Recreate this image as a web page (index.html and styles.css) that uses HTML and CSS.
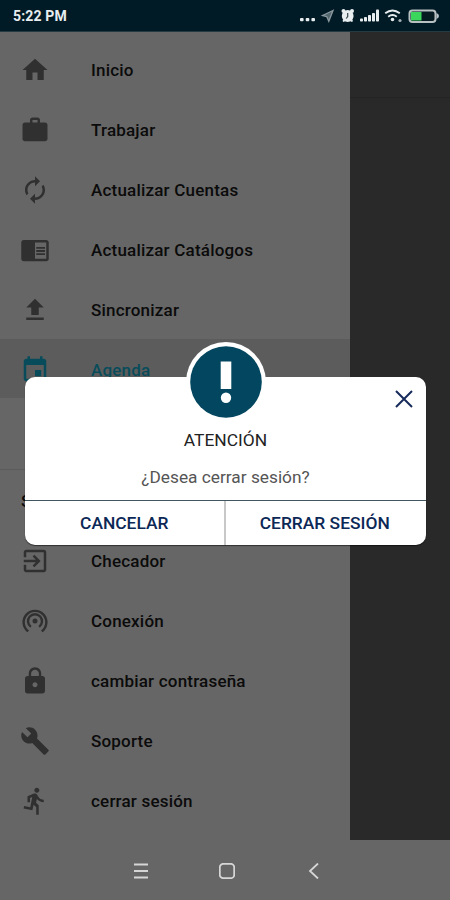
FILE: index.html
```html
<!DOCTYPE html>
<html lang="es">
<head>
<meta charset="utf-8">
<title>Menú</title>
<link rel="stylesheet" href="styles.css">
</head>
<body>
<div class="screen">
  <header class="status">
    <span class="time">5:22 PM</span>
    <svg class="status-icons" viewBox="0 0 142 20" width="142" height="20">
      <g fill="#e8eef0">
        <rect x="0" y="12" width="3.6" height="3.2" rx="1"/><rect x="5.7" y="12" width="3.6" height="3.2" rx="1"/><rect x="11.4" y="12" width="3.6" height="3.2" rx="1"/>
        <circle cx="47.700" cy="10" r="5.900"/><circle cx="43.500" cy="5" r="2"/><circle cx="52" cy="5" r="2"/>
        <path d="M42.500 15l1-2 2 2-2 1zM53 15l-1-2-2 2 2 1z"/>
        <rect x="60" y="12.500" width="3" height="3" rx=".8"/><rect x="64" y="11" width="3" height="4.500" rx=".8"/><rect x="68" y="9" width="3" height="6.500" rx=".8"/><rect x="72" y="7" width="3" height="8.500" rx=".8"/><rect x="76" y="3.500" width="3" height="12" rx=".8"/>
        <circle cx="92.500" cy="13.500" r="1.800"/><circle cx="100" cy="14.500" r="1.600" opacity=".7"/>
        <path d="M136.500 7q2.500 1 2.500 3t-2.500 3z" opacity=".8"/>
      </g>
      <path d="M22.500 9.500L33 4.500l-4.200 10.700-2-4.500z" fill="#52666d" stroke="#8b999e" stroke-width="1.300"/>
      <path d="M47.700 7v3.500l-1.500 2" fill="none" stroke="#31444b" stroke-width="1.200"/>
      <g fill="none" stroke="#e8eef0" stroke-width="1.900"><path d="M85.200 7.300q7.300-5.500 14.600 0"/><path d="M88.200 10.700q4.300-3.400 8.600 0"/></g>
      <rect x="109.500" y="4.500" width="26" height="11.500" rx="3" fill="#061a22" stroke="#b9c0c2" stroke-width="2"/>
      <rect x="111" y="6" width="10.500" height="8.500" fill="#3bd65c"/>
    </svg>
  </header>
  <div class="main">
    <nav class="drawer">
      <a class="item"><svg class="icon" viewBox="0 0 24 24"><path d="M10 20v-6h4v6h5v-8h3L12 3 2 12h3v8z"/></svg><span>Inicio</span></a>
      <a class="item"><svg class="icon" viewBox="0 0 24 24"><path fill-rule="evenodd" d="M20 6h-4V4c0-1.110-.89-2-2-2h-4c-1.110 0-2 .89-2 2v2H4c-1.110 0-2 .89-2 2v11c0 1.110.89 2 2 2h16c1.110 0 2-.89 2-2V8c0-1.110-.89-2-2-2zm-6 0h-4V4h4v2z"/></svg><span>Trabajar</span></a>
      <a class="item"><svg class="icon" viewBox="0 0 24 24"><path d="M12 6v3l4-4-4-4v3c-4.420 0-8 3.580-8 8 0 1.570.46 3.030 1.240 4.260L6.700 14.800c-.45-.83-.7-1.790-.7-2.800 0-3.310 2.690-6 6-6zm6.760 1.740L17.300 9.200c.44.84.7 1.790.7 2.800 0 3.310-2.690 6-6 6v-3l-4 4 4 4v-3c4.420 0 8-3.580 8-8 0-1.570-.46-3.030-1.240-4.260z"/></svg><span>Actualizar Cuentas</span></a>
      <a class="item"><svg class="icon" viewBox="0 0 24 24"><path fill-rule="evenodd" d="M13 12h7v1.500h-7zM13 9.500h7V11h-7zM13 14.500h7V16h-7zM21 4H3c-1.100 0-2 .9-2 2v13c0 1.100.9 2 2 2h18c1.100 0 2-.9 2-2V6c0-1.100-.9-2-2-2zm0 15h-9V6h9v13z"/></svg><span>Actualizar Catálogos</span></a>
      <a class="item"><svg class="icon" viewBox="0 0 24 24"><path d="M9 16h6v-6h4l-7-7-7 7h4zM5 18h14v2H5z"/></svg><span>Sincronizar</span></a>
      <a class="item active"><svg class="icon" viewBox="0 0 24 24"><path fill-rule="evenodd" d="M17 12h-5v5h5v-5zM16 1v2H8V1H6v2H5c-1.110 0-1.990.9-1.990 2L3 19c0 1.100.89 2 2 2h14c1.100 0 2-.9 2-2V5c0-1.100-.9-2-2-2h-1V1h-2zm3 18H5V8h14v11z"/></svg><span>Agenda</span></a>
      <div class="heading">S</div>
      <a class="item"><svg class="icon" viewBox="0 0 24 24"><path d="M10.090 15.590L11.500 17l5-5-5-5-1.410 1.410L12.670 11H3v2h9.670l-2.580 2.590zM19 3H5c-1.110 0-2 .9-2 2v4h2V5h14v14H5v-4H3v4c0 1.100.89 2 2 2h14c1.100 0 2-.9 2-2V5c0-1.100-.9-2-2-2z"/></svg><span>Checador</span></a>
      <a class="item"><svg class="icon" viewBox="0 0 24 24"><circle cx="12" cy="12" r="2"/><path class="arc" d="M8.700 16.700a5.600 5.600 0 1 1 6.600 0M6.600 20.300a9.100 9.100 0 1 1 10.800 0"/></svg><span>Conexión</span></a>
      <a class="item"><svg class="icon" viewBox="0 0 24 24"><path fill-rule="evenodd" d="M18 8h-1V6c0-2.760-2.240-5-5-5S7 3.240 7 6v2H6c-1.100 0-2 .9-2 2v10c0 1.100.9 2 2 2h12c1.100 0 2-.9 2-2V10c0-1.100-.9-2-2-2zm-6 9c-1.100 0-2-.9-2-2s.9-2 2-2 2 .9 2 2-.9 2-2 2zm3.100-9H8.900V6c0-1.710 1.390-3.100 3.100-3.100s3.100 1.390 3.100 3.100v2z"/></svg><span>cambiar contraseña</span></a>
      <a class="item"><svg class="icon" viewBox="0 0 24 24"><path d="M22.700 19l-9.100-9.100c.9-2.300.4-5-1.500-6.900-2-2-5-2.400-7.400-1.300L9 6 6 9 1.600 4.700C.4 7.100.9 10.100 2.900 12.100c1.900 1.900 4.600 2.400 6.900 1.500l9.100 9.100c.4.4 1 .4 1.400 0l2.300-2.300c.5-.4.5-1.100.1-1.400z"/></svg><span>Soporte</span></a>
      <a class="item"><svg class="icon" viewBox="0 0 24 24"><path d="M13.490 5.480c1.100 0 2-.9 2-2s-.9-2-2-2-2 .9-2 2 .9 2 2 2zm-3.600 13.900l1-4.400 2.100 2v6h2v-7.500l-2.100-2 .6-3c1.300 1.500 3.300 2.500 5.500 2.500v-2c-1.900 0-3.500-1-4.300-2.400l-1-1.600c-.4-.6-1-1-1.700-1-.3 0-.5.1-.8.1l-5.200 2.200v4.700h2v-3.400l1.800-.7-1.600 8.100-4.900-1-.4 2 7 1.400z"/></svg><span>cerrar sesión</span></a>
    </nav>
    <div class="page"><div class="page-bar"></div></div>
  </div>
  <footer class="navbar">
    <svg viewBox="0 0 16 16"><path d="M1 1.500h14M1 8h14M1 14.500h14"/></svg>
    <svg viewBox="0 0 16 16"><rect x=".8" y=".8" width="14.400" height="14.400" rx="3.500"/></svg>
    <svg viewBox="0 0 16 16"><path d="M13 .5L5 8l8 7.500"/></svg>
  </footer>

  <section class="dialog">
    <svg class="badge" viewBox="0 0 80 80"><circle cx="40" cy="40" r="40" fill="#fff"/><circle cx="40" cy="40" r="35.800" fill="#02465f"/><path d="M34.700 19.500h10.600v27.500H34.700z" fill="#fff"/><circle cx="40" cy="55.700" r="5.200" fill="#fff"/></svg>
    <svg class="close" viewBox="0 0 18 18"><path d="M1 1l16 16M17 1L1 17"/></svg>
    <h1 class="title">ATENCIÓN</h1>
    <p class="message">¿Desea cerrar sesión?</p>
    <div class="actions"><button>CANCELAR</button><button>CERRAR SESIÓN</button></div>
  </section>
</div>
</body>
</html>
```
FILE: styles.css
```css
* { box-sizing: border-box; }
body { margin: 0; font-family: Roboto, "Liberation Sans", sans-serif; }
.screen {
  position: relative;
  width: 450px;
  height: 900px;
  display: flex;
  flex-direction: column;
  background: #666;
  overflow: hidden;
}
.status {
  height: 32px;
  flex: none;
  display: flex;
  justify-content: space-between;
  align-items: center;
  padding: 1px 8px 0 13px;
  background: #001b26;
  border-bottom: 1px solid #263a42;
}
.time { color: #e8eef0; font-size: 14px; font-weight: 700; letter-spacing: .15px; }
.main { display: flex; height: 808px; flex: none; }
.drawer { width: 350px; padding-top: 8px; background: #666; }
.item {
  display: flex;
  align-items: center;
  gap: 41px;
  height: 60px;
  padding-left: 20px;
  color: #0b0b0b;
  font-size: 17px;
  font-weight: 500;
  letter-spacing: .2px;
}
.icon { width: 30px; height: 30px; flex: none; fill: #303030; }
.icon .arc { fill: none; stroke: #303030; stroke-width: 1.900; }
.active { height: 59px; margin-top: -1px; margin-bottom: 1px; background: #5c5c5c; color: #084c5b; padding-top: 2px; }
.active .icon { fill: #084c5b; }
.heading {
  height: 62px;
  margin-top: 71px;
  padding: 21px 0 0 21px;
  border-top: 1px solid #5b5b5b;
  color: #0b0b0b;
  font-size: 17px;
  font-weight: 500;
}
.page { flex: 1; background: #292929; }
.page-bar { height: 66px; border-bottom: 1px solid #242424; }
.navbar { flex: 1; display: flex; align-items: center; gap: 70px; padding: 1px 0 0 133px; background: #666; }
.navbar svg { width: 16px; height: 16px; fill: none; stroke: #d6d6d6; stroke-width: 1.800; }
.dialog {
  position: absolute;
  left: 25px;
  top: 377px;
  width: 401px;
  height: 168px;
  display: flex;
  flex-direction: column;
  align-items: center;
  padding-top: 52px;
  background: #fff;
  border-radius: 10px;
  box-shadow: 0 1px 1px #0008;
}
.badge { position: absolute; left: 160.500px; top: -35.500px; width: 80px; height: 80px; }
.close { position: absolute; left: 370px; top: 13px; width: 18px; height: 18px; stroke: #172b5b; stroke-width: 2; }
.title { margin: 0; font-size: 17.400px; line-height: 22px; font-weight: 400; color: #222; }
.message { margin: 16px 0 0; font-size: 17.300px; line-height: 20px; color: #555; }
.actions { display: flex; align-self: stretch; margin-top: auto; height: 45px; border-top: 1px solid #40575f; }
.actions button {
  flex: 1 1 0;
  padding: 0;
  border: 0;
  background: none;
  font: 500 17.400px Roboto, "Liberation Sans", sans-serif;
  color: #0c2856;
}
.actions button + button { border-left: 2px solid #c8c8c8; }
.actions button:last-child { padding-right: 2px; }
```
